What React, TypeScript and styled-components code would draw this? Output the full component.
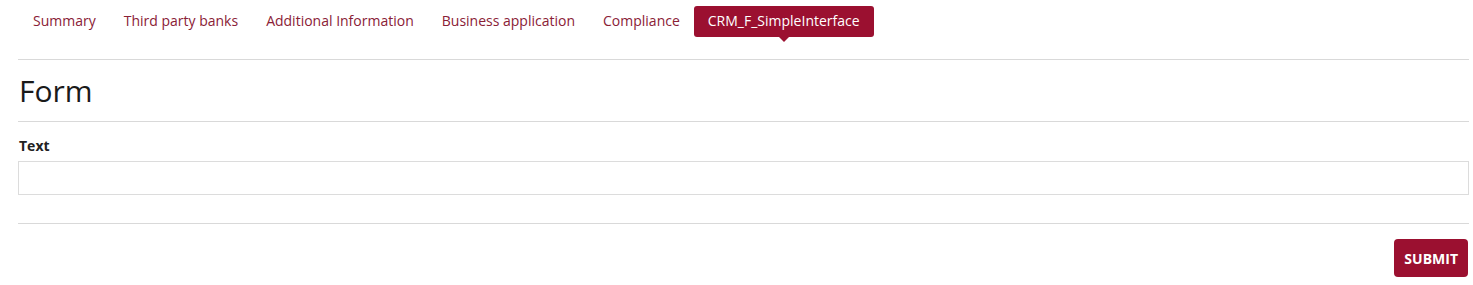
import styled, { createGlobalStyle } from "styled-components";

const tabs = [
  "Summary",
  "Third party banks",
  "Additional Information",
  "Business application",
  "Compliance",
  "CRM_F_SimpleInterface",
];

const GlobalStyle = createGlobalStyle`
  body {
    margin: 0;
    background: #fff;
    font-family: "Open Sans", "Liberation Sans", sans-serif;
    color: #222;
  }
`;

const App = () => {
  return (
    <>
      <GlobalStyle />
      <S.Page>
        <S.TabBar>
          {tabs.map((t, i) => (
            <S.Tab key={t} active={i === tabs.length - 1}>
              {t}
            </S.Tab>
          ))}
        </S.TabBar>
        <S.Divider />
        <S.Title>Form</S.Title>
        <S.Divider />
        <S.Field>
          <S.Label>Text</S.Label>
          <S.Input type="text" />
        </S.Field>
        <S.Divider />
        <S.Actions>
          <S.Submit>Submit</S.Submit>
        </S.Actions>
      </S.Page>
    </>
  );
};

export default App;

const S = {
  Page: styled.div`
    padding: 6px 4px 8px 18px;
  `,

  TabBar: styled.div`
    display: flex;
    align-items: center;
    padding-left: 1px;
    margin-bottom: 22px;
  `,

  Tab: styled.div<{ active?: boolean }>`
    position: relative;
    box-sizing: border-box;
    height: 31px;
    display: flex;
    align-items: center;
    padding: 0 14px 2px;
    font-size: 14px;
    color: ${(p) => (p.active ? "#fff" : "#8a2136")};
    background: ${(p) => (p.active ? "#9b1030" : "transparent")};
    border-radius: 3px;
    cursor: pointer;

    &::after {
      content: "";
      display: ${(p) => (p.active ? "block" : "none")};
      position: absolute;
      left: 50%;
      bottom: -5px;
      margin-left: -5px;
      border-left: 5px solid transparent;
      border-right: 5px solid transparent;
      border-top: 5px solid #9b1030;
    }
  `,

  Divider: styled.hr`
    margin: 0;
    border: 0;
    border-top: 1px solid #d9d9d9;
  `,

  Title: styled.h1`
    margin: 0;
    padding: 13px 0 12px 1px;
    font-size: 30px;
    font-weight: 400;
    line-height: 36px;
    color: #1a1a1a;
  `,

  Field: styled.div`
    display: flex;
    flex-direction: column;
    padding: 14px 0 28px;
  `,

  Label: styled.label`
    font-size: 14px;
    font-weight: 700;
    line-height: 19px;
    padding-left: 1px;
    margin-bottom: 6px;
    color: #222;
  `,

  Input: styled.input`
    box-sizing: border-box;
    height: 34px;
    width: 100%;
    border: 1px solid #dcdcdc;
    border-radius: 0;
    padding: 0 8px;
    font-family: inherit;
    font-size: 14px;
    outline: none;
  `,

  Actions: styled.div`
    display: flex;
    justify-content: flex-end;
    padding-top: 15px;
  `,

  Submit: styled.button`
    height: 38px;
    padding: 0 10px;
    margin-right: 1px;
    border: 0;
    border-radius: 4px;
    background: #9b1030;
    color: #fff;
    font-family: inherit;
    font-size: 14px;
    font-weight: 700;
    text-transform: uppercase;
    cursor: pointer;
  `,
};
